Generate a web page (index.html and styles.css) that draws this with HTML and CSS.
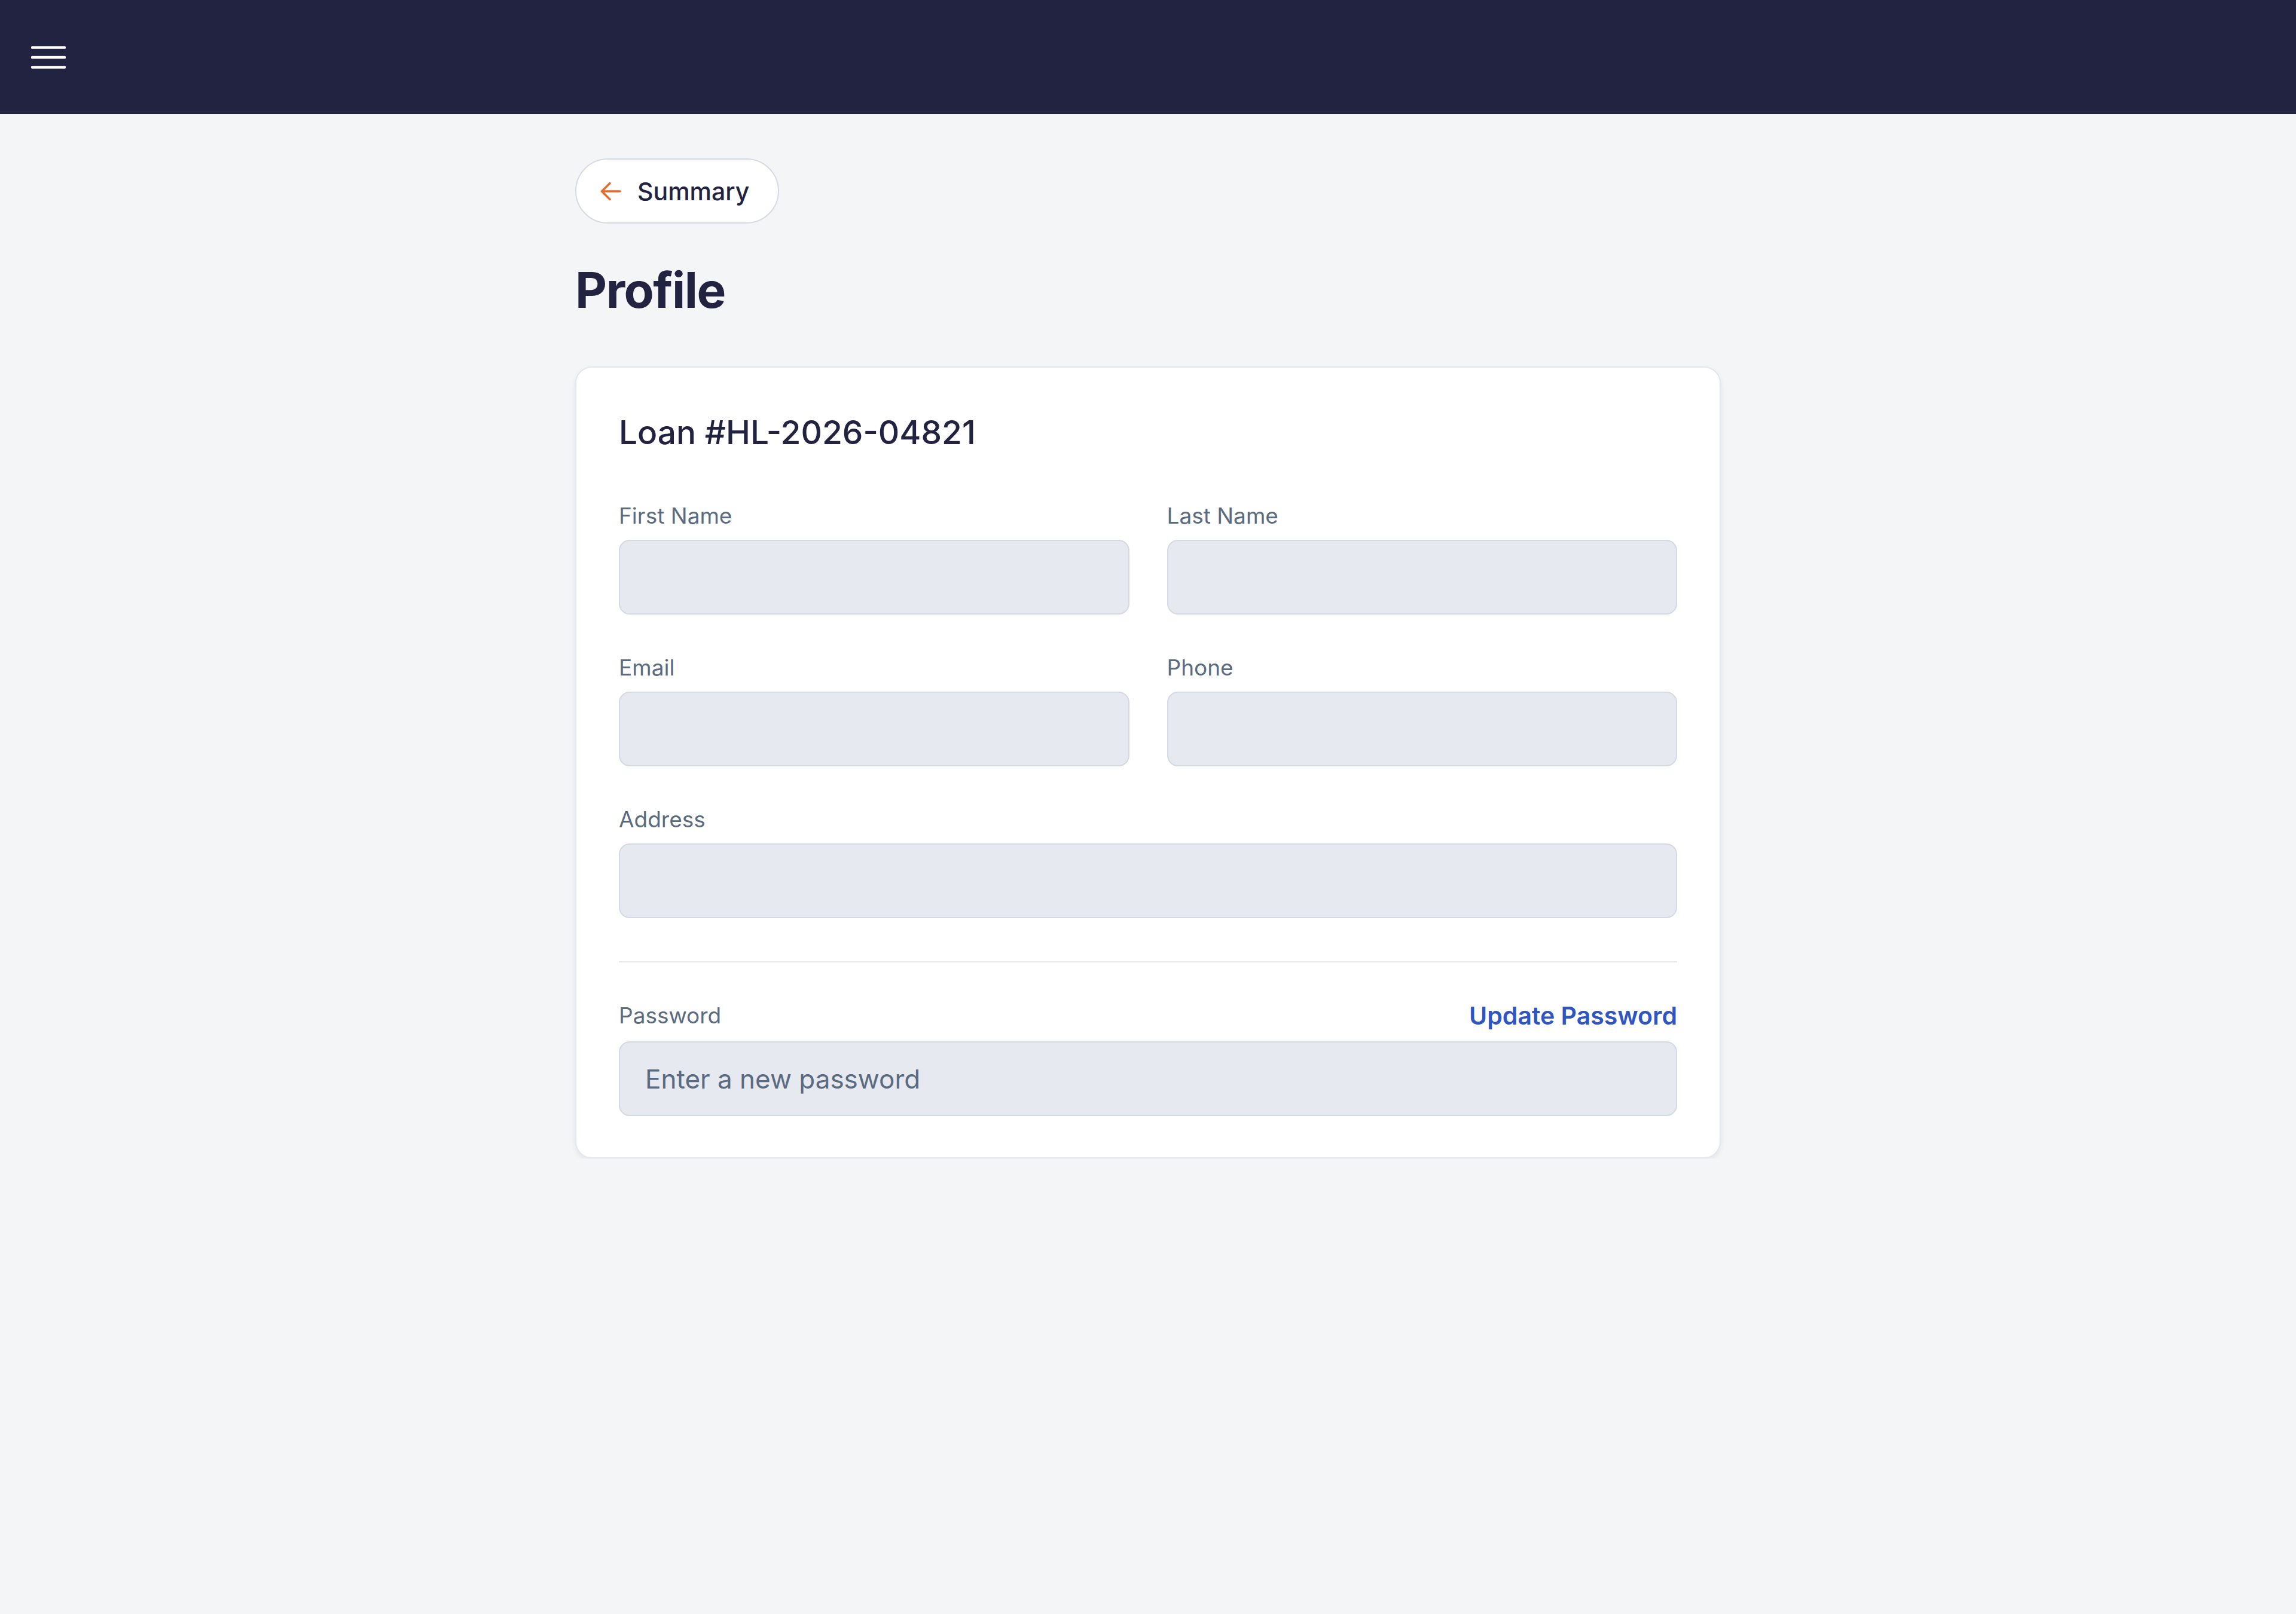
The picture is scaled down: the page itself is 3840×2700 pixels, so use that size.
FILE: index.html
```html
<!DOCTYPE html>
<html lang="en">
<head>
  <meta charset="UTF-8">
  <meta name="viewport" content="width=device-width, initial-scale=1.0">
  <title>Profile</title>
  <link rel="stylesheet" href="styles.css">
</head>
<body>

  <header class="topbar">
    <button class="menu-btn" aria-label="Menu">
      <svg width="58" height="40" viewBox="0 0 58 40">
        <line x1="2" y1="3.5" x2="56" y2="3.5" />
        <line x1="2" y1="20" x2="56" y2="20" />
        <line x1="2" y1="36.5" x2="56" y2="36.5" />
      </svg>
    </button>
  </header>

  <main class="page">
    <a class="back-btn" href="#">
      <svg width="36" height="32" viewBox="0 0 36 32">
        <path d="M33 16H3M16 2.5L2.5 16L16 29.5" />
      </svg>
      <span>Summary</span>
    </a>

    <h1 class="page-title">Profile</h1>

    <section class="card">
      <h2 class="card-title">Loan #HL-2026-04821</h2>

      <div class="form-grid">
        <div class="field">
          <label for="first-name">First Name</label>
          <input type="text" id="first-name">
        </div>
        <div class="field">
          <label for="last-name">Last Name</label>
          <input type="text" id="last-name">
        </div>
        <div class="field">
          <label for="email">Email</label>
          <input type="text" id="email">
        </div>
        <div class="field">
          <label for="phone">Phone</label>
          <input type="text" id="phone">
        </div>
        <div class="field full">
          <label for="address">Address</label>
          <input type="text" id="address">
        </div>
      </div>

      <hr class="divider">

      <div class="field">
        <div class="field-head">
          <label for="password">Password</label>
          <a class="link" href="#">Update Password</a>
        </div>
        <input type="password" id="password" placeholder="Enter a new password">
      </div>
    </section>
  </main>

</body>
</html>
```

FILE: styles.css
```css
* {
  box-sizing: border-box;
}

body {
  margin: 0;
  font-family: Inter, 'Noto Sans', sans-serif;
  background: #f4f5f7;
  color: #222340;
}

.topbar {
  height: 191px;
  background: #222340;
  display: flex;
  align-items: center;
  padding-left: 52px;
}

.menu-btn {
  background: none;
  border: none;
  padding: 0;
  display: flex;
  cursor: pointer;
}

.menu-btn line {
  stroke: #ffffff;
  stroke-width: 4.5;
  stroke-linecap: round;
}

.page {
  width: 1916px;
  margin: 0 auto;
  padding-top: 74px;
}

.back-btn {
  display: inline-flex;
  align-items: center;
  gap: 26px;
  height: 109px;
  padding: 0 48px 0 40px;
  border: 2px solid #d5dbe3;
  border-radius: 60px;
  background: #ffffff;
  color: #222340;
  text-decoration: none;
  font-size: 41px;
  font-weight: 500;
}

.back-btn path {
  fill: none;
  stroke: #e8672a;
  stroke-width: 3.5;
  stroke-linecap: round;
  stroke-linejoin: round;
}

.page-title {
  margin: 63px 0 78px;
  font-size: 82px;
  line-height: 1.2;
  font-weight: 700;
  letter-spacing: -1.5px;
}

.card {
  background: #ffffff;
  border: 2px solid #e3e6ea;
  border-radius: 28px;
  box-shadow: 0 4px 10px rgba(30, 35, 60, 0.07);
  padding: 73px 71px 69px;
}

.card-title {
  margin: 0 0 80px;
  font-size: 55px;
  line-height: 70px;
  font-weight: 500;
}

.form-grid {
  display: grid;
  grid-template-columns: 1fr 1fr;
  column-gap: 63px;
  row-gap: 64px;
}

.field {
  display: flex;
  flex-direction: column;
  gap: 15px;
}

.field.full {
  grid-column: 1 / -1;
}

.field label {
  font-size: 37px;
  line-height: 50px;
  color: #5a6b80;
}

.field input {
  height: 125px;
  border: 2px solid #d4dae3;
  border-radius: 18px;
  background: #e6e9ef;
  padding: 0 42px;
  font-family: inherit;
  font-size: 44px;
  color: #222340;
}

.field input::placeholder {
  color: #5a6a80;
}

.field input:focus {
  outline: none;
}

.divider {
  border: none;
  height: 2px;
  background: #e6e9ef;
  margin: 72px 0 61px;
}

.field-head {
  display: flex;
  justify-content: space-between;
  align-items: center;
  height: 56px;
}

.link {
  font-size: 41px;
  font-weight: 600;
  color: #2f55c0;
  text-decoration: none;
}
```
